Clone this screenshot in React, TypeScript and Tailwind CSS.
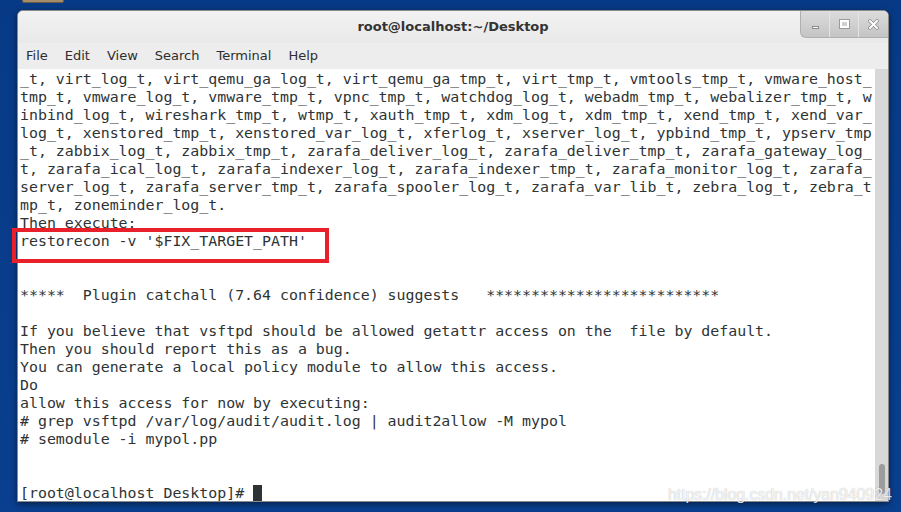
import React from 'react';

const LINES: string[] = [
    '_t, virt_log_t, virt_qemu_ga_log_t, virt_qemu_ga_tmp_t, virt_tmp_t, vmtools_tmp_t, vmware_host_',
    'tmp_t, vmware_log_t, vmware_tmp_t, vpnc_tmp_t, watchdog_log_t, webadm_tmp_t, webalizer_tmp_t, w',
    'inbind_log_t, wireshark_tmp_t, wtmp_t, xauth_tmp_t, xdm_log_t, xdm_tmp_t, xend_tmp_t, xend_var_',
    'log_t, xenstored_tmp_t, xenstored_var_log_t, xferlog_t, xserver_log_t, ypbind_tmp_t, ypserv_tmp',
    '_t, zabbix_log_t, zabbix_tmp_t, zarafa_deliver_log_t, zarafa_deliver_tmp_t, zarafa_gateway_log_',
    't, zarafa_ical_log_t, zarafa_indexer_log_t, zarafa_indexer_tmp_t, zarafa_monitor_log_t, zarafa_',
    'server_log_t, zarafa_server_tmp_t, zarafa_spooler_log_t, zarafa_var_lib_t, zebra_log_t, zebra_t',
    'mp_t, zoneminder_log_t.',
    'Then execute:',
    "restorecon -v '$FIX_TARGET_PATH'",
    '',
    '',
    '*****  Plugin catchall (7.64 confidence) suggests   **************************',
    '',
    'If you believe that vsftpd should be allowed getattr access on the  file by default.',
    'Then you should report this as a bug.',
    'You can generate a local policy module to allow this access.',
    'Do',
    'allow this access for now by executing:',
    '# grep vsftpd /var/log/audit/audit.log | audit2allow -M mypol',
    '# semodule -i mypol.pp',
    '',
    '',
];

const MENU = ['File', 'Edit', 'View', 'Search', 'Terminal', 'Help'];

export default function App() {
    return (
        <div className="relative w-[901px] h-[512px] overflow-hidden bg-gradient-to-b from-[#073a86] to-[#0a3f8f] pt-[10px] pl-[17px]">
            {/* desktop icon peeking at top */}
            <div className="absolute left-[22px] top-[-4px] w-[42px] h-[7px] bg-[#a48c6c] border border-[#6b5a44] rounded-b-[2px]" />

            {/* Terminal window */}
            <div className="w-[872px] h-[492px] flex flex-col bg-white border border-[#8a8a8a] rounded-t-[6px] shadow-[0_2px_6px_rgba(0,0,0,0.5)] overflow-hidden">
                {/* Title bar */}
                <div className="relative h-[32px] shrink-0 bg-gradient-to-b from-[#f2f2f2] to-[#e9e9e9] flex items-center justify-center">
                    <span className="text-[13px] font-bold text-[#333] font-['DejaVu_Sans',sans-serif]">root@localhost:~/Desktop</span>
                    <div className="absolute right-0 top-0 h-[27px] flex bg-gradient-to-b from-[#dcdcdc] to-[#c4c4c4] border-l border-b border-[#b0b0b0] rounded-bl-[6px]">
                        <div className="w-[29px] flex items-end justify-center pb-[8px] border-r border-[#e4e4e4]">
                            <div className="w-[7px] h-[3px] bg-white border border-[#8a8a8a]" />
                        </div>
                        <div className="w-[29px] flex items-center justify-center border-r border-[#e4e4e4]">
                            <div className="w-[9px] h-[8px] border-[2px] border-white outline outline-1 outline-[#9a9a9a]" />
                        </div>
                        <div className="w-[29px] flex items-center justify-center">
                            <svg width="11" height="11" viewBox="0 0 11 11">
                                <path d="M2 2 L9 9 M9 2 L2 9" stroke="#8a8a8a" strokeWidth="3.4" strokeLinecap="square" />
                                <path d="M2 2 L9 9 M9 2 L2 9" stroke="#ffffff" strokeWidth="2" strokeLinecap="square" />
                            </svg>
                        </div>
                    </div>
                </div>

                {/* Menu bar */}
                <div className="h-[26px] shrink-0 bg-[#ededed] flex items-center pl-[8px] gap-[17px] text-[13px] text-[#2e2e2e] font-['DejaVu_Sans',sans-serif]">
                    {MENU.map(m => (
                        <span key={m}>{m}</span>
                    ))}
                </div>

                {/* Terminal body */}
                <div className="flex-1 flex min-h-0">
                    <div className="flex-1 pl-[2px] pt-[1px] font-['DejaVu_Sans_Mono',monospace] text-[14.9px] leading-[18px] text-[#2e3436] whitespace-pre overflow-hidden">
                        {LINES.map((l, i) => (
                            <div key={i} className="h-[18px]">{l}</div>
                        ))}
                        <div className="h-[18px] flex items-center">
                            <span>[root@localhost Desktop]# </span>
                            <span className="inline-block w-[9px] h-[17px] bg-[#2e3436]" />
                        </div>
                    </div>
                    {/* Scrollbar */}
                    <div className="w-[13px] shrink-0 bg-[#d8d8d8] flex flex-col justify-end items-center pb-[7px]">
                        <div className="w-[6px] h-[30px] rounded-full bg-[#9c9c9c]" />
                    </div>
                </div>
            </div>

            {/* Red annotation box */}
            <div className="absolute left-[12px] top-[228px] w-[317px] h-[35px] border-[4px] border-[#e8202a]" />

            {/* Watermark */}
            <div className="absolute left-[668px] top-[483px] text-[16px] text-white/85 [text-shadow:0_0_1px_rgba(0,0,0,0.35)] font-['Liberation_Sans',sans-serif] tracking-[-0.1px]">
                https://blog.csdn.net/yan940924
            </div>
        </div>
    );
}
